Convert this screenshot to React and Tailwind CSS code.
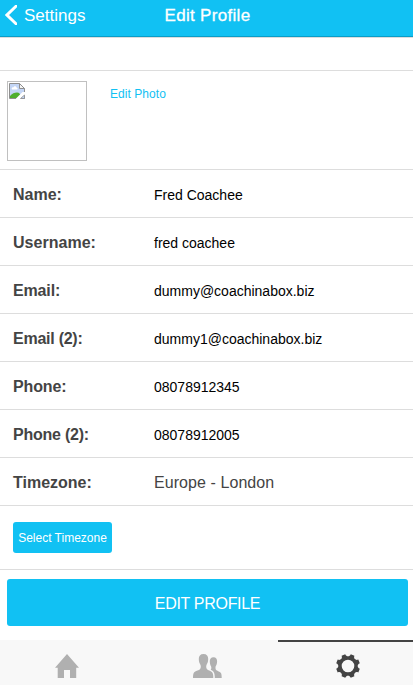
import React from "react";

const rows = [
  ["Name:", "Fred Coachee", "tracking-normal"],
  ["Username:", "fred coachee", "tracking-[0.03px]"],
  ["Email:", "dummy@coachinabox.biz", "tracking-[-0.15px]"],
  ["Email (2):", "dummy1@coachinabox.biz", "tracking-[-0.25px]"],
  ["Phone:", "08078912345", "tracking-[-0.15px]"],
  ["Phone (2):", "08078912005", "tracking-[-0.23px]"],
];

function Label({ children, tracking = "tracking-normal" }) {
  return (
    <div className={`w-[141px] shrink-0 pt-[2px] text-base leading-5 font-bold text-[#444] ${tracking}`}>{children}</div>
  );
}

function MissingImage() {
  return (
    <svg width="16" height="16" viewBox="0 0 16 16" className="m-px block">
      <path d="M.5.5h10l5 5v10H.5z" fill="#c3d5f5" stroke="#8f8f8f" />
      <path d="M3 6.500c-1-1.500.5-2.600 1.400-2 .7-1.900 3.200-1.200 3.200.3 1.300 0 1.400 1.700.3 1.700z" fill="#fff" />
      <path d="M1 15v-2C3 10.500 5.500 9.500 8 9.500c2.200 0 4 2 5 5.500z" fill="#4fae2e" />
      <path d="M10.500.5v5h5z" fill="#f4f4f4" stroke="#8e8e8e" />
      <path d="M16 9 13.500 9 7 15.500 7 16h4.500L16 12.500z" fill="#fff" />
      <path d="M11.500 15.500h4v-3.500z" fill="#c3d5f5" stroke="#8f8f8f" strokeWidth=".8" />
    </svg>
  );
}

function HomeIcon() {
  return (
    <svg width="24" height="24" viewBox="0 0 24 24" fill="#b0b0b0">
      <path d="M12 0 0 13.800h2.700V24H9v-8h6v8h6.200V13.800H24z" />
    </svg>
  );
}

function PeopleIcon() {
  return (
    <svg width="29" height="24" viewBox="0 0 29 24" fill="#b0b0b0">
      <path d="M10.500 0c3.200 0 4.800 2 4.700 5.100-.1 2.800-.7 4.300-1.600 5.700-.7 1.200-.5 3.900.7 4.800 1.600 1 3.700 1.500 4.800 2.700 1 1.100 1.200 3.100 1.200 5.700H0c0-2.600.2-4.600 1.200-5.700 1.100-1.200 3.900-1.700 5.500-2.700 1.200-.9 1.400-3.600.7-4.800-.9-1.400-1.500-2.900-1.600-5.700C5.700 2 7.300 0 10.500 0z" />
      <path d="M20.500 3.300c2.500 0 3.700 1.700 3.600 4.100-.1 2.200-.6 3.500-1.300 4.600-.6 1-.4 3.500.6 4.300 1.300.9 3.400 1.400 4.300 2.400.8.900 1 2.700 1 5.300h-6.900c0-3.100-.3-5.200-1.500-6.600-.7-.8-1.600-1.200-2.600-1.600.7-.9.9-2.500.2-3.800-.7-1.100-1-2.400-1.100-4.500-.1-2.400 1.200-4.200 3.700-4.200z" />
    </svg>
  );
}

function GearIcon() {
  return (
    <svg width="24" height="24" viewBox="0 0 24 24" fill="#444">
      <path
        fillRule="evenodd"
        d="M9.200.2c.8 1.500 1.500 2.100 2.800 2.100S14 1.700 14.800.2l3.600 1.500c-.5 1.600-.4 2.500.5 3.400s1.800 1 3.400.5l1.500 3.600c-1.500.8-2.100 1.500-2.100 2.800s.6 2 2.100 2.800l-1.500 3.600c-1.600-.5-2.500-.4-3.400.5s-1 1.800-.5 3.400l-3.600 1.500c-.8-1.500-1.500-2.100-2.800-2.100s-2 .6-2.800 2.100l-3.600-1.500c.5-1.600.4-2.500-.5-3.400s-1.800-1-3.400-.5L.2 14.800c1.500-.8 2.100-1.500 2.100-2.800S1.700 10 .2 9.200l1.500-3.600c1.600.5 2.500.4 3.400-.5s1-1.800.5-3.400zM12 5.700a6.300 6.300 0 1 0 0 12.600 6.300 6.300 0 0 0 0-12.600z"
      />
    </svg>
  );
}

export default function App() {
  return (
    <div className="flex h-[685px] w-[413px] flex-col overflow-hidden bg-white font-['Liberation_Sans',Arial,sans-serif]">
      <header className="grid h-[37px] shrink-0 grid-cols-3 border-b border-[#0a9dc7] bg-[#11c1f3] text-[17px] leading-[32px] text-white">
        <div className="flex pl-[5px]">
          <svg width="12" height="20" viewBox="0 0 12 20" className="mt-[5px] mr-[7px]">
            <path d="M11 1.200 2 10l9 8.800" fill="none" stroke="#fff" strokeWidth="3" strokeLinecap="round" />
          </svg>
          <span>Settings</span>
        </div>
        <h1 className="pl-[2px] text-center tracking-[0.3px] whitespace-nowrap [-webkit-text-stroke:0.3px_white]">Edit Profile</h1>
      </header>

      <main className="flex flex-1 flex-col">
        <div className="h-[34px] border-t border-b border-[#ddd]" />
        <section className="flex h-[99px] border-b border-[#ddd] pt-[10px] pl-[7px]">
          <div className="size-20 border border-[#c0c0c0]">
            <MissingImage />
          </div>
          <a className="mt-[5px] ml-[23px] text-xs leading-4 tracking-[0.05px] text-[#11c1f3]">Edit Photo</a>
        </section>
        {rows.map(([label, value, tracking]) => (
          <div key={label} className="flex h-12 items-center border-b border-[#ddd] pl-[13px]">
            <Label tracking={tracking}>{label}</Label>
            <div className="pt-[2px] text-sm leading-5 text-black">{value}</div>
          </div>
        ))}
        <div className="flex h-12 items-center border-b border-[#ddd] pl-[13px]">
          <Label>Timezone:</Label>
          <div className="pt-[2px] text-base leading-5 tracking-[0.07px] text-[#444]">Europe - London</div>
        </div>
        <div className="h-16 border-b border-[#ddd] pt-4 pl-[13px]">
          <button className="h-[31px] w-[99px] rounded-[3px] bg-[#11c1f3] text-xs whitespace-nowrap text-white">Select Timezone</button>
        </div>
        <button className="mt-[9px] mr-[5px] ml-[7px] h-[47px] rounded-[3px] bg-[#11c1f3] pt-[2px] text-base tracking-[-0.3px] text-white">EDIT PROFILE</button>
      </main>

      <nav className="-ml-[3px] flex h-[45px] shrink-0 bg-[#f8f8f8]">
        <div className="flex w-[140px] shrink-0 justify-center pt-[14px]"><HomeIcon /></div>
        <div className="flex w-[141px] shrink-0 justify-center pt-[14px]"><PeopleIcon /></div>
        <div className="flex w-[140px] shrink-0 justify-center border-t-2 border-[#444] pt-3"><GearIcon /></div>
      </nav>
    </div>
  );
}
